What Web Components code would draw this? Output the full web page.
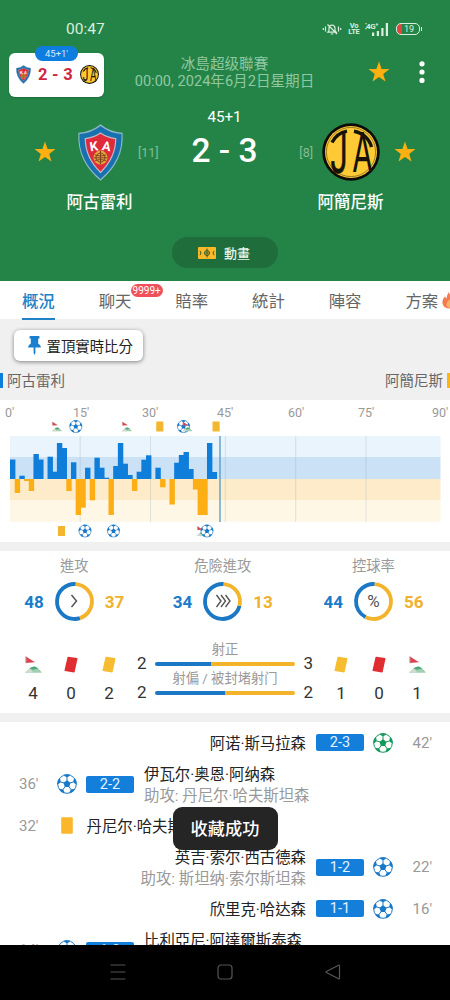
<!DOCTYPE html>
<html lang="zh-Hant">
<head>
<meta charset="utf-8">
<title>冰島超级聯賽</title>
<style>
    html, body { margin: 0; background: #fff; }
    body {
        --green: #248447; --blue: #0b7dda; --orange: #fdb515; --grey: #f0f0f0;
        font-family: Roboto, "Noto Sans CJK SC", sans-serif;
        width: 450px; height: 1000px; overflow: hidden;
    }
</style>
</head>
<body>
<match-app></match-app>
<script>
class BaseElement extends HTMLElement {
    constructor() {
        super();
        this.attachShadow({mode: 'open'});
    }

    connectedCallback() {
        this.shadowRoot.innerHTML = `<style>* { box-sizing: border-box; } svg { display: block; overflow: visible; }</style>` + this.render();
    }

    attr(name, fallback = '') {
        return this.getAttribute(name) || fallback;
    }
}

/* ---------- icons ---------- */

function ballArt() {
    const at = (r, deg) => {
        const a = (deg - 90) * Math.PI / 180;
        return `${(10 + r * Math.cos(a)).toFixed(2)} ${(10 + r * Math.sin(a)).toFixed(2)}`;
    };
    let core = '', seams = '', patches = '';
    for (let i = 0; i < 5; i++) {
        const d = i * 72;
        core += (i ? 'L' : 'M') + at(3.7, d);
        seams += `M${at(3, d)}L${at(7.4, d)}`;
        patches += `M${at(6.7, d)}L${at(8, d + 16)}L${at(9.7, d + 19)}L${at(9.8, d)}L${at(9.7, d - 19)}L${at(8, d - 16)}Z`;
    }
    return `<circle cx="10" cy="10" r="9.3" fill="#fff" stroke="currentColor" stroke-width="1"/>
        <path d="${core}Z" fill="currentColor"/>
        <path d="${patches}" fill="currentColor"/>
        <path d="${seams}" fill="none" stroke="currentColor" stroke-width="1"/>`;
}

const ICONS = {
    star: ['0 0 22 22', '<path fill="#fdb010" d="M11 .5l2.6 7.4 7.9.2-6.3 4.8 2.3 7.6L11 16l-6.5 4.5 2.3-7.6L.5 8.1l7.9-.2z"/>'],
    dots: ['0 0 6 22', '<g fill="#fff"><circle cx="3" cy="2.8" r="2.6"/><circle cx="3" cy="11" r="2.6"/><circle cx="3" cy="19.4" r="2.6"/></g>'],
    ball: ['0 0 20 20', ballArt()],
    card: ['0 0 12 17', '<rect x=".2" y=".3" width="11.6" height="16.4" rx="1" fill="currentColor"/>'],
    tilted: ['0 0 14 17', '<path d="M4.3.7l8.6 1.3q.7.1.6.8l-2.8 13q-.2.7-.8.6L1 15.1q-.7-.1-.5-.8L3.5 1.3Q3.6.6 4.3.7z" fill="currentColor"/>'],
    flag: ['0 0 17 17', '<path d="M.6.3L10 6.2.8 7z" fill="#dc4450"/><path d="M1 .5v7" stroke="#b8a09c" stroke-width=".7"/><path d="M0 16.7Q5.5 10.3 9.5 10.4 13.5 11.5 17 16.7z" fill="#9fceb2"/><path d="M0 16.7q3-3.5 6-5 .3 3.5 2.6 5z" fill="#d2dbcf"/><path d="M4.5 12.4q2.5-2 5-2 2 .6 3.6 2.1l-5.6 1.2z" fill="#4fa677"/>'],
    pin: ['0 0 13 19', '<path fill="#1b7fd0" d="M2.300 0h8.400q.8 0 .8.8v1.100q0 .7-.8.7h-.5v4.800q2.600 1.500 2.800 4H7.400v5.700L6.500 19l-.9-1.900v-5.700H0q.2-2.500 2.800-4V2.600h-.5q-.8 0-.8-.7V.8q0-.8.8-.8z"/>'],
    fire: ['0 0 16 18', '<path fill="#f47b50" d="M7.2 0q.8 3.1 3.8 5.4Q15.4 9 14.2 13q-1.2 4-6 4.5Q2 17.4.6 12.4-.3 8 3.4 4.6q.2 1.6 1.2 2.6Q5.2 3.2 7.2 0z"/><path fill="#f7b267" d="M8 8q3.6 3 3 6-1 2.6-3.2 2.7-3-.4-3.1-3.2Q4.8 10.5 8 8z"/>'],
    pitch: ['0 0 18 12', '<rect width="18" height="12" rx="1" fill="#fbb829"/><g fill="none" stroke="#355f2c" stroke-width="1"><circle cx="9" cy="6" r="2.5"/><path d="M9 1.5v9M7.2 6h3.6M2 3.9q2 2.1 0 4.2M16 3.9q-2 2.1 0 4.2"/></g>'],
    one: ['0 0 20 20', '<path d="M7.5 4l5 6-5 6" fill="none" stroke="#555" stroke-width="1.5"/>'],
    three: ['0 0 20 20', '<path d="M3.5 4l4.5 6-4.5 6M8 4l4.5 6L8 16M12.5 4l4.5 6-4.500 6" fill="none" stroke="#555" stroke-width="1.4"/>'],
    mute: ['0 0 20 14', '<g fill="none" stroke="#d9efdf" stroke-width="1.2"><path d="M5.8 10.2h8.4l-1.2-1.7V6q-.3-2.7-3-3-2.7.3-3 3v2.5zM8.8 12h2.4M5.5 2.5l9.5 9.5M3.5 4.5v5M1.3 6v2M16.5 4.5v5M18.7 6v2"/></g>'],
    bars: ['0 0 17 13', '<g fill="#d9efdf"><rect x="0" y="9.5" width="2.2" height="3.5"/><rect x="4.8" y="8" width="2.2" height="5"/><rect x="9.3" y="5" width="2.2" height="8"/><rect x="13.8" y="0" width="2.2" height="13"/></g>'],
    menu: ['0 0 16 16', '<path d="M.5 1h15M.5 8h15M.5 15h15" stroke="#555" stroke-width="1.2"/>'],
    home: ['0 0 16 16', '<rect x="1" y="1" width="14" height="14" rx="3" fill="none" stroke="#555" stroke-width="1.2"/>'],
    back: ['0 0 16 16', '<path d="M14.5 1.8v12.4q0 1-.9.5L1.4 8.5q-.8-.5 0-1L13.6 1.3q.9-.5.9.5z" fill="none" stroke="#555" stroke-width="1.2"/>'],
    shield: ['0 0 45 57', `
        <path d="M22.5.3Q32 8 44.6 8.8 46.5 37 22.5 56.7-1.5 37 .4 8.800 13 8 22.500.3z" fill="#8fb7c8"/>
        <path d="M22.5 1.9Q32 9.3 43.5 10 44.9 36 22.5 55-.1 36 1.5 10 13 9.300 22.500 1.900z" fill="#1770b0"/>
        <path d="M22.5 9Q29 13.5 37.7 14.6 37.800 33.500 22.500 48.500 7.200 33.500 7.300 14.600 16 13.500 22.500 9z" fill="#de2a3b" stroke="#c6b7c2" stroke-width="1.2"/>
        <text transform="translate(12.5 27.5) rotate(-9)" font-family="Roboto" font-weight="700" font-size="13" fill="#fff">K</text>
        <text transform="translate(23.5 26) rotate(9)" font-family="Roboto" font-weight="700" font-size="13" fill="#fff">A</text>
        <circle cx="22.5" cy="33.6" r="7" fill="#e0a637"/>
        <path d="M22.5 27v13M17 31q5.5 2 11 0M16 33.8h13M17 36.5q5.5-2 11 0" stroke="#7d3a20" stroke-width=".9" fill="none"/>
        <circle cx="22.5" cy="33.6" r="4.5" fill="none" stroke="#7d3a20" stroke-width=".9"/>`],
    roundel: ['0 0 58 58', `
        <circle cx="29" cy="29" r="28.8" fill="#0c0b08"/>
        <circle cx="29" cy="29" r="26" fill="#fdca35"/>
        <circle cx="29" cy="29" r="24.6" fill="none" stroke="#0c0b08" stroke-width=".8" opacity=".5"/>
        <path d="M10 19.5A21.5 21.5 0 0 1 25 8.2" fill="none" stroke="#17130a" stroke-width="3.4"/>
        <text transform="translate(8.5 50) scale(.74 1.34)" font-family="Roboto" font-weight="400" font-size="43" textLength="23" lengthAdjust="spacingAndGlyphs" fill="#17130a" stroke="#17130a" stroke-width=".5">J</text>
        <path d="M32 8.2A21.5 21.5 0 0 1 49.5 24" fill="none" stroke="#17130a" stroke-width="3.4"/>
        <text transform="translate(30.5 48.5) scale(.74 1.3)" font-family="Roboto" font-weight="400" font-size="43" textLength="27" lengthAdjust="spacingAndGlyphs" fill="#17130a">A</text>`]
};

class UiIcon extends BaseElement {
    render() {
        const [box, art] = ICONS[this.attr('name')];
        const [, , w, h] = box.split(' ').map(Number);
        const size = this.attr('size', w);
        return `<style>:host { display: block; flex: none; color: ${this.attr('tint', '#1a78c8')}; }</style>
            <svg viewBox="${box}" width="${size}" height="${size * h / w}">${art}</svg>`;
    }
}

/* ---------- header ---------- */

class StatusBar extends BaseElement {
    render() {
        return `<style>
            :host { display: flex; align-items: center; height: 46px; padding: 12px 28px 0 66px; color: #d9efdf; font-size: 15.5px; }
            .icons { margin-left: auto; display: flex; align-items: center; }
            .lte { font-size: 7.5px; font-weight: 700; line-height: 6.5px; text-align: center; margin: 0 5px 0 6px; letter-spacing: -.3px; }
            .net { display: grid; margin-right: 7px; }
            .net > * { grid-area: 1 / 1; }
            .net span { font-size: 8px; font-weight: 700; line-height: 7px; letter-spacing: -.4px; }
            .net ui-icon { margin-left: 7px; }
            .battery { width: 24px; height: 12.5px; border: 1.3px solid #d9efdf; border-radius: 5px; font-size: 9px; line-height: 10px; text-align: center; background: linear-gradient(90deg, #e0453f 5px, transparent 5px); padding-left: 3px; }
            .cap { width: 1.5px; height: 4px; background: #d9efdf; margin-left: 1px; }
        </style>
        <span>00:47</span>
        <div class="icons">
            <ui-icon name="mute"></ui-icon>
            <div class="lte">Vo<br>LTE</div>
            <div class="net"><span>⁚4G⁺</span><ui-icon name="bars"></ui-icon></div>
            <div class="battery">19</div><div class="cap"></div>
        </div>`;
    }
}

class MiniScore extends BaseElement {
    render() {
        return `<style>
            :host { display: flex; position: relative; align-items: center; justify-content: space-between; width: 95px; height: 43.5px; padding: 0 5px 0 7px; background: #fff; border-radius: 6px; color: #cf2540; font-size: 16.5px; font-weight: 700; box-shadow: 0 1px 2px #0003; letter-spacing: .3px; }
            .clock { position: absolute; left: 26px; top: -7px; width: 43px; height: 15px; border-radius: 8px; background: #0d7de0; color: #d5ebff; font-size: 9.5px; font-weight: 400; line-height: 15px; text-align: center; letter-spacing: 0; }
        </style>
        <ui-icon name="shield" size="15"></ui-icon><span>${this.attr('score')}</span><ui-icon name="roundel" size="19"></ui-icon>
        <div class="clock">${this.attr('clock')}</div>`;
    }
}

class LeagueBar extends BaseElement {
    render() {
        return `<style>
            :host { display: flex; height: 58px; padding: 7px 25px 0 9px; }
            .title { flex: 1; padding: 3px 23px 0 0; text-align: center; color: #90c8a2; font-size: 14.6px; line-height: 17px; white-space: nowrap; }
            .tools { display: flex; gap: 29px; padding-top: 8px; }
        </style>
        <mini-score score="2 - 3" clock="45+1'"></mini-score>
        <div class="title"><slot></slot></div>
        <div class="tools"><ui-icon name="star"></ui-icon><ui-icon name="dots"></ui-icon></div>`;
    }
}

class TeamBlock extends BaseElement {
    render() {
        const away = this.hasAttribute('away');
        return `<style>
            :host { display: block; width: ${away ? 126 : 125}px; color: #fff; }
            .row { display: flex; flex-direction: ${away ? 'row-reverse' : 'row'}; height: 58px; align-items: center; }
            .crest { width: 58px; display: flex; justify-content: center; margin: ${away ? '0 14px 0 9px' : '0 9px 0 15px'}; }
            .rank { font-size: 12.5px; color: #86bd97; }
            .name { font-size: 16.5px; font-weight: 500; line-height: 22px; margin-top: 11px; width: 66px; white-space: nowrap; margin-left: ${away ? 27.5 : 32.5}px; }
        </style>
        <div class="row"><ui-icon name="star"></ui-icon><div class="crest"><ui-icon name="${this.attr('crest')}"></ui-icon></div><span class="rank">[${this.attr('rank')}]</span></div>
        <div class="name"><slot></slot></div>`;
    }
}

class MatchHead extends BaseElement {
    render() {
        return `<style>
            :host { display: block; background: var(--green); height: 281px; }
            .match { display: grid; grid-template-columns: 125px 131px 126px; padding: 19px 0 0 34px; height: 133px; }
            .score { text-align: center; color: #fff; font-weight: 500; font-size: 33.5px; line-height: 40px; margin-top: -15px; white-space: nowrap; }
            .score small { display: block; font-size: 15.2px; font-weight: 400; line-height: 18px; margin-bottom: 4.5px; }
            .play { display: flex; align-items: center; gap: 8px; width: 106px; height: 31px; margin: 0 auto; padding-left: 26px; border-radius: 16px; background: #1f6d3a; color: #e6f5ea; font-size: 13px; font-weight: 500; }
        </style>
        <status-bar></status-bar>
        <league-bar>冰島超级聯賽<br>00:00, 2024年6月2日星期日</league-bar>
        <div class="match">
            <team-block crest="shield" rank="11">阿古雷利</team-block>
            <div class="score"><small>45+1</small>2 - 3</div>
            <team-block away crest="roundel" rank="8">阿簡尼斯</team-block>
        </div>
        <div class="play"><ui-icon name="pitch"></ui-icon>動畫</div>`;
    }
}

/* ---------- tabs ---------- */

class TabItem extends BaseElement {
    render() {
        const on = this.hasAttribute('active');
        return `<style>
            :host { display: flex; flex: none; width: 76.7px; justify-content: center; }
            .label { position: relative; height: 38.5px; line-height: 41.5px; font-size: 16.4px; white-space: nowrap;
                color: ${on ? '#2183c7' : '#666'}; font-weight: ${on ? 500 : 400}; border-bottom: 2.5px solid ${on ? '#2183c7' : 'transparent'}; }
            .badge { position: absolute; left: 32px; top: 3px; width: 32px; height: 13px; border-radius: 7px; background: #f0505a; color: #fff; font-size: 10px; line-height: 13.5px; text-align: center; }
            ui-icon { position: absolute; left: 37px; top: 11px; }
        </style>
        <div class="label"><slot></slot>
            ${this.attr('badge') ? `<span class="badge">${this.attr('badge')}</span>` : ''}
            ${this.hasAttribute('hot') ? '<ui-icon name="fire" size="15"></ui-icon>' : ''}
        </div>`;
    }
}

class TabStrip extends BaseElement {
    render() {
        return `<style>:host { display: flex; height: 38px; background: #fff; overflow: visible; }</style><slot></slot>`;
    }
}

class PinPanel extends BaseElement {
    render() {
        return `<style>
            :host { display: block; height: 81px; background: var(--grey); padding-top: 11px; }
            .pin { display: flex; align-items: center; gap: 5.5px; width: 129px; height: 31px; margin-left: 14px; padding-left: 14px; border-radius: 6px; background: #fff; box-shadow: 0 1px 4px #0007; color: #222; font-size: 14.4px; white-space: nowrap; }
            .teams { display: flex; justify-content: space-between; margin-top: 12px; height: 15px; line-height: 17px; font-size: 14.5px; color: #666; border-left: 3px solid var(--blue); border-right: 3px solid var(--orange); padding: 0 4px; }
        </style>
        <div class="pin"><ui-icon name="pin"></ui-icon>置頂實時比分</div>
        <div class="teams"><span>阿古雷利</span><span>阿簡尼斯</span></div>`;
    }
}

/* ---------- momentum chart ---------- */

// minute -> bar height, home team grows up and away team grows down
const HOME = {0: 19.5, 2: 3.3, 5: 25, 6: 19.5, 8: 22.3, 9: 7.3, 10: 36, 11: 31, 13: 16.7, 16: 11.3, 18: 21.3, 19: 11.3, 20: 1.3, 22: 13, 23: 36, 24: 15.3, 25: 4, 27: 7.3, 28: 19.3, 29: 23.7, 31: 11.3, 35: 16.3, 36: 24, 37: 27, 38: 10, 42: 36, 43: 7};
const AWAY = {1: 14, 3: 2, 4: 12, 12: 12, 14: 36, 15: 28.7, 17: 21.3, 21: 36, 26: 12, 32: 8.3, 34: 25.5, 39: 10.5, 40: 36, 41: 36};

class MomentumChart extends BaseElement {
    bars(data, up) {
        return Object.entries(data).map(([m, h]) =>
            `<rect x="${(m * 4.69).toFixed(2)}" y="${up ? 43 - h : 43}" width="5.4" height="${h}"/>`).join('');
    }

    marker(name, x, y, w, h, tint) {
        const [box, art] = ICONS[name];
        return `<svg x="${x - w / 2 - 9.5}" y="${y - h / 2}" width="${w}" height="${h}" viewBox="${box}" color="${tint || '#1a78c8'}">${art}</svg>`;
    }

    render() {
        const y = '#f3b72f';
        return `<style>
            :host { display: block; height: 141.5px; background: #fff; padding-top: 5px; }
            .axis { display: grid; grid-template-columns: 68px 69px 75px 71px 70px 74px auto; padding-left: 5px; height: 31.3px; font-size: 12.5px; line-height: 16px; color: #999; white-space: nowrap; }
            .plot { margin-left: 9.5px; }
        </style>
        <div class="axis">${[0, 15, 30, 45, 60, 75, 90].map(m => `<span>${m}'</span>`).join('')}</div>
        <svg class="plot" width="430.5" height="86">
            <rect width="430.5" height="21" fill="#e9f4fc"/>
            <rect y="21" width="430.5" height="22" fill="#cbe2f6"/>
            <rect y="43" width="430.5" height="21" fill="#fdebca"/>
            <rect y="64" width="430.5" height="21.7" fill="#fff7e6"/>
            <path d="M70.2 0v86M140.5 0v86M215.3 0v86M285.7 0v86M356 0v86" stroke="#8ca0b0" stroke-opacity=".25" stroke-width="1"/>
            <g fill="#0f7edb">${this.bars(HOME, true)}</g>
            <g fill="#fcae14">${this.bars(AWAY, false)}</g>
            <path d="M210 0v86" stroke="#4391c4" stroke-width="1.2"/>
            ${this.marker('flag', 56.5, -9.5, 10, 10)}
            ${this.marker('ball', 75.3, -9.5, 13, 13)}
            ${this.marker('flag', 126.5, -9.5, 10, 10)}
            ${this.marker('card', 159.3, -9.5, 7.5, 10.5, y)}
            ${this.marker('ball', 183, -9.5, 13, 13)}
            ${this.marker('flag', 187, -9.5, 10, 10)}
            ${this.marker('card', 215.6, -9.5, 7.5, 10.5, y)}
            ${this.marker('card', 61, 95, 7.5, 10.5, y)}
            ${this.marker('ball', 84.5, 95, 13, 13)}
            ${this.marker('ball', 113, 95, 13, 13)}
            ${this.marker('flag', 201.5, 95, 10, 10)}
            ${this.marker('ball', 206.5, 95, 13, 13)}
        </svg>`;
    }
}

/* ---------- stats ---------- */

class RingStat extends BaseElement {
    render() {
        const home = +this.attr('home'), away = +this.attr('away');
        const c = 2 * Math.PI * 17.5, share = c * away / (home + away);
        const icon = this.attr('icon');
        return `<style>
            :host { display: flex; flex-direction: column; align-items: center; font-size: 14.3px; line-height: 20px; color: #999; }
            .row { display: flex; align-items: center; gap: 11px; margin-top: 6px; font-size: 17px; font-weight: 700; }
            .home { color: #1a7bcb; } .away { color: #f0b12d; }
            .row > span { margin-top: 2px; }
            .ring { display: grid; place-items: center; width: 39px; height: 39px; font-size: 17px; font-weight: 400; color: #555; }
            .ring > * { grid-area: 1 / 1; }
        </style>
        <slot></slot>
        <div class="row"><span class="home">${home}</span>
            <div class="ring">
                <svg width="39" height="39"><g fill="none" stroke-width="3.8" transform="rotate(-86 19.5 19.5)">
                    <circle cx="19.5" cy="19.5" r="17.5" stroke="#1a78c4" stroke-dasharray="${c - share} ${share}" stroke-dashoffset="${-share}"/>
                    <circle cx="19.5" cy="19.5" r="17.5" stroke="#f3b42c" stroke-dasharray="${share} ${c}"/>
                </g></svg>
                ${icon ? `<ui-icon name="${icon}"></ui-icon>` : '<span>%</span>'}
            </div>
        <span class="away">${away}</span></div>`;
    }
}

class CountStat extends BaseElement {
    render() {
        return `<style>
            :host { display: flex; flex-direction: column; align-items: center; width: 38px; font-size: 17px; line-height: 20px; color: #333; gap: 10px; }
        </style><ui-icon name="${this.attr('icon')}" tint="${this.attr('tint', '#000')}"></ui-icon><slot></slot>`;
    }
}

class ShotLine extends BaseElement {
    render() {
        const home = +this.attr('home'), away = +this.attr('away');
        return `<style>
            :host { display: grid; grid-template-columns: 27.2px 139.2px 27.2px; height: 29.3px; align-items: end; justify-content: center; text-align: center; color: #333; font-size: 17px; line-height: 18px; }
            .mid { font-size: 13.3px; line-height: 16px; color: #999; white-space: nowrap; padding-bottom: 6px; }
            .bar { height: 4px; margin-top: 4px; border-radius: 2px; background: linear-gradient(90deg, #1a78c4 ${100 * home / (home + away)}%, #f3b42c 0); }
        </style>
        <span>${home}</span><div class="mid"><slot></slot><div class="bar"></div></div><span>${away}</span>`;
    }
}

class StatsPanel extends BaseElement {
    render() {
        return `<style>
            :host { display: block; height: 180.5px; background: #fff; border: solid var(--grey); border-width: 9.5px 0; padding-top: 5px; }
            .rings { display: grid; grid-template-columns: 148.6px 148.4px 153px; height: 83px; }
            .counts { display: flex; padding: 0 14px; }
            .side { display: flex; padding-top: 17px; }
            .shots { flex: 1; padding-top: 3.2px; }
        </style>
        <div class="rings">
            <ring-stat home="48" away="37" icon="one">進攻</ring-stat>
            <ring-stat home="34" away="13" icon="three">危險進攻</ring-stat>
            <ring-stat home="44" away="56">控球率</ring-stat>
        </div>
        <div class="counts">
            <div class="side">
                <count-stat icon="flag">4</count-stat>
                <count-stat icon="tilted" tint="#e02d31">0</count-stat>
                <count-stat icon="tilted" tint="#f6bd30">2</count-stat>
            </div>
            <div class="shots">
                <shot-line home="2" away="3">射正</shot-line>
                <shot-line home="2" away="2">射偏 / 被封堵射门</shot-line>
            </div>
            <div class="side">
                <count-stat icon="tilted" tint="#f6bd30">1</count-stat>
                <count-stat icon="tilted" tint="#e02d31">0</count-stat>
                <count-stat icon="flag">1</count-stat>
            </div>
        </div>`;
    }
}

/* ---------- events ---------- */

class EventRow extends BaseElement {
    render() {
        const away = this.hasAttribute('away'), score = this.attr('score'), assist = this.attr('assist');
        const icon = score
            ? `<ui-icon name="ball" tint="${this.attr('tint', '#1a78c8')}"></ui-icon>`
            : '<ui-icon name="card" tint="#fcb62c"></ui-icon>';
        return `<style>
            :host { display: flex; flex: none; flex-direction: ${away ? 'row-reverse' : 'row'}; align-items: center; height: 41.5px; padding: 0 18px; }
            .min { width: 39px; padding-left: 1px; font-size: 15px; color: #999; text-align: ${away ? 'right' : 'left'}; }
            .icon { width: 20px; display: flex; justify-content: center; }
            .score { width: 48px; height: 17px; margin: 0 9px; border-radius: 2px; background: #147fdb; color: #e4f3ff; font-size: 14.5px; line-height: 17.5px; text-align: center; }
            .who { font-size: 15.4px; line-height: 21px; color: #222; white-space: nowrap; text-align: ${away ? 'right' : 'left'}; margin: 2.5px ${score ? 1 : 9.5}px 0; }
            .who small { display: block; font-size: 15.4px; color: #999; }
        </style>
        <span class="min">${this.attr('minute')}'</span>
        <div class="icon">${icon}</div>
        ${score ? `<span class="score">${score}</span>` : ''}
        <div class="who"><slot></slot>${assist ? `<small>助攻: ${assist}</small>` : ''}</div>`;
    }
}

class EventList extends BaseElement {
    render() {
        return `<style>:host { display: flex; flex-direction: column; height: 223px; overflow: hidden; background: #fff; }</style><slot></slot>`;
    }
}

class ToastMessage extends BaseElement {
    render() {
        return `<style>
            :host { display: block; position: absolute; left: 172.5px; top: 806.5px; width: 105px; height: 43.5px; border-radius: 9px; background: #252525; color: #fff; font-size: 17.2px; font-weight: 500; line-height: 45px; text-align: center; }
        </style><slot></slot>`;
    }
}

class NavBar extends BaseElement {
    render() {
        return `<style>:host { display: flex; justify-content: space-between; height: 56px; padding: 19px 109.5px 0; background: #000; }</style>
        <ui-icon name="menu"></ui-icon><ui-icon name="home"></ui-icon><ui-icon name="back"></ui-icon>`;
    }
}

class MatchApp extends BaseElement {
    render() {
        return `<style>:host { display: block; position: relative; width: 450px; height: 1000px; overflow: hidden; }</style>
        <match-head></match-head>
        <tab-strip>
            <tab-item active>概況</tab-item>
            <tab-item badge="9999+">聊天</tab-item>
            <tab-item>賠率</tab-item>
            <tab-item>統計</tab-item>
            <tab-item>陣容</tab-item>
            <tab-item hot>方案</tab-item>
        </tab-strip>
        <pin-panel></pin-panel>
        <momentum-chart></momentum-chart>
        <stats-panel></stats-panel>
        <event-list>
            <event-row away minute="42" score="2-3" tint="#149a5b">阿诺·斯马拉森</event-row>
            <event-row minute="36" score="2-2" assist="丹尼尔·哈夫斯坦森">伊瓦尔·奥恩·阿纳森</event-row>
            <event-row minute="32">丹尼尔·哈夫斯坦森</event-row>
            <event-row away minute="22" score="1-2" assist="斯坦纳·索尔斯坦森">英吉·索尔·西古德森</event-row>
            <event-row away minute="16" score="1-1">欣里克·哈达森</event-row>
            <event-row minute="14" score="1-0" assist="丹尼尔·哈夫斯坦森">比利亞尼·阿達爾斯泰森</event-row>
        </event-list>
        <nav-bar></nav-bar>
        <toast-message>收藏成功</toast-message>`;
    }
}

customElements.define('ui-icon', UiIcon);
customElements.define('status-bar', StatusBar);
customElements.define('mini-score', MiniScore);
customElements.define('league-bar', LeagueBar);
customElements.define('team-block', TeamBlock);
customElements.define('match-head', MatchHead);
customElements.define('tab-item', TabItem);
customElements.define('tab-strip', TabStrip);
customElements.define('pin-panel', PinPanel);
customElements.define('momentum-chart', MomentumChart);
customElements.define('ring-stat', RingStat);
customElements.define('count-stat', CountStat);
customElements.define('shot-line', ShotLine);
customElements.define('stats-panel', StatsPanel);
customElements.define('event-row', EventRow);
customElements.define('event-list', EventList);
customElements.define('toast-message', ToastMessage);
customElements.define('nav-bar', NavBar);
customElements.define('match-app', MatchApp);
</script>
</body>
</html>
